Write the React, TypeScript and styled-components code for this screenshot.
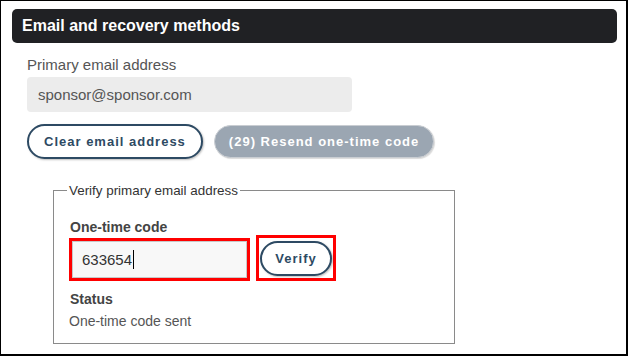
import React from "react";
import styled, { createGlobalStyle } from "styled-components";

const Global = createGlobalStyle`
  html, body { margin: 0; padding: 0; background: #fff; }
  body { font-family: "Liberation Sans", Arial, sans-serif; }
`;

const Frame = styled.div`
  width: 628px;
  height: 356px;
  box-sizing: border-box;
  border: 1px solid #000;
  border-right-width: 2px;
  border-bottom-width: 2px;
  padding: 8px 9px 0 11px;
  background: #fff;
  overflow: hidden;
`;

const Header = styled.div`
  height: 34px;
  width: 605px;
  box-sizing: border-box;
  background: #202124;
  border-radius: 5px;
  color: #fff;
  font-size: 16px;
  font-weight: 700;
  display: flex;
  align-items: center;
  padding-left: 10px;
`;

const Body = styled.div`
  padding-left: 15px;
  display: flex;
  flex-direction: column;
  align-items: flex-start;
`;

const FieldLabel = styled.div`
  margin-top: 13px;
  font-size: 15px;
  line-height: 17px;
  color: #555;
`;

const ReadOnlyField = styled.div`
  margin-top: 4px;
  width: 325px;
  height: 35px;
  box-sizing: border-box;
  background: #ececec;
  border-radius: 4px;
  color: #555;
  font-size: 15px;
  display: flex;
  align-items: center;
  padding-left: 11px;
`;

const ButtonRow = styled.div`
  margin-top: 12px;
  display: flex;
  align-items: center;
  gap: 11px;
`;

const PillButton = styled.button<{ $variant?: "outline" | "disabled" }>`
  font-family: "Liberation Sans", Arial, sans-serif;
  font-size: 13px;
  font-weight: 700;
  letter-spacing: 1px;
  height: ${(p) => (p.$variant === "disabled" ? "33px" : "35px")};
  border-radius: 18px;
  box-sizing: border-box;
  padding: 0 ${(p) => (p.$variant === "disabled" ? "14px" : "15px")};
  cursor: pointer;
  ${(p) =>
    p.$variant === "disabled"
      ? `
    background: #9ba6b2;
    color: #fff;
    border: 1px solid #c9cdd2;
    box-shadow: 1px 1px 1px rgba(0,0,0,0.15);
  `
      : `
    background: #fff;
    color: #2d4a63;
    border: 2px solid #2d4a63;
    box-shadow: 1px 1px 2px rgba(0,0,0,0.25);
  `}
`;

const Fieldset = styled.fieldset`
  margin: 24px 0 0 41px;
  width: 402px;
  height: 161px;
  box-sizing: border-box;
  border: 1px solid #8a8a8a;
  padding: 0 14px 0 14px;
`;

const Legend = styled.legend`
  font-size: 13.4px;
  color: #333;
  padding: 0 2px;
  margin-left: -1px;
`;

const SubLabel = styled.div`
  margin-top: 21px;
  padding-left: 2px;
  font-size: 14px;
  font-weight: 700;
  line-height: 16px;
  color: #444;
`;

const CodeRow = styled.div`
  display: flex;
  align-items: flex-end;
  gap: 6px;
  margin-left: 1px;
`;

const Highlight = styled.div<{ $w: number; $h: number }>`
  width: ${(p) => p.$w}px;
  height: ${(p) => p.$h}px;
  box-sizing: border-box;
  border: 3px solid #ff0000;
  display: flex;
  align-items: center;
  justify-content: center;
`;

const CodeInput = styled.div`
  width: 100%;
  height: 100%;
  box-sizing: border-box;
  border: 1px solid #c8c8c8;
  background: #f8f8f8;
  font-size: 15px;
  color: #333;
  display: flex;
  align-items: center;
  padding-left: 9px;
`;

const Caret = styled.span`
  display: inline-block;
  width: 1px;
  height: 19px;
  background: #000;
  margin-left: 1px;
`;

const VerifyButton = styled(PillButton)`
  height: 35px;
  width: 72px;
  padding: 0;
  margin-top: 1px;
`;

const StatusLabel = styled(SubLabel)`
  margin-top: 10px;
`;

const StatusText = styled.div`
  margin-top: 6px;
  padding-left: 1px;
  font-size: 14px;
  line-height: 16px;
  color: #555;
`;

export default function App() {
  return (
    <>
      <Global />
      <Frame>
        <Header>Email and recovery methods</Header>
        <Body>
          <FieldLabel>Primary email address</FieldLabel>
          <ReadOnlyField>sponsor@sponsor.com</ReadOnlyField>
          <ButtonRow>
            <PillButton $variant="outline">Clear email address</PillButton>
            <PillButton $variant="disabled">(29) Resend one-time code</PillButton>
          </ButtonRow>
        </Body>
        <Fieldset>
          <Legend>Verify primary email address</Legend>
          <SubLabel>One-time code</SubLabel>
          <CodeRow>
            <Highlight $w={181} $h={43}>
              <CodeInput>
                633654
                <Caret />
              </CodeInput>
            </Highlight>
            <Highlight $w={80} $h={46}>
              <VerifyButton $variant="outline">Verify</VerifyButton>
            </Highlight>
          </CodeRow>
          <StatusLabel>Status</StatusLabel>
          <StatusText>One-time code sent</StatusText>
        </Fieldset>
      </Frame>
    </>
  );
}
